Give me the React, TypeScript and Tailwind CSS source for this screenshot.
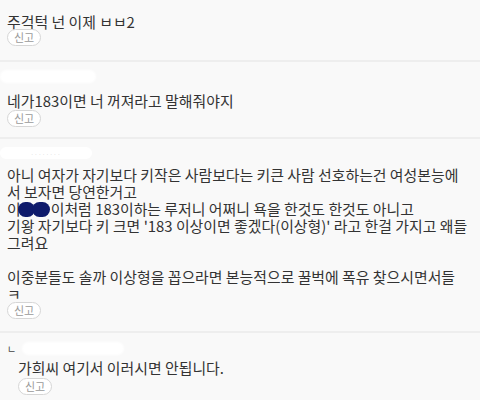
import React from 'react';

const ReportButton: React.FC<{ className?: string }> = ({ className = '' }) => (
  <button
    className={`flex items-center justify-center w-[34px] h-[17px] rounded-full border border-[#d6d6d6] bg-white text-[11px] leading-none text-[#9a9a9a] ${className}`}
  >
    신고
  </button>
);

// erased nickname area
const Blur: React.FC<{ className?: string }> = ({ className = '' }) => (
  <div className={`rounded-full bg-white blur-[1px] ${className}`} />
);

const Masked: React.FC = () => (
  <span className="inline-flex align-[-2px] -ml-[3px] mr-[1px]">
    <span className="w-[17px] h-[15px] rounded-full bg-[#0e1a6b]" />
    <span className="w-[18px] h-[15px] -ml-[3px] rounded-full bg-[#0e1a6b]" />
  </span>
);

const lines = [
  '아니 여자가 자기보다 키작은 사람보다는 키큰 사람 선호하는건 여성본능에',
  '서 보자면 당연한거고',
  null,
  "기왕 자기보다 키 크면 '183 이상이면 좋겠다(이상형)' 라고 한걸 가지고 왜들",
  '그려요',
  '',
  '이중분들도 솔까 이상형을 꼽으라면 본능적으로 꿀벅에 폭유 찾으시면서들',
  'ㅋ',
];

const App: React.FC = () => {
  return (
    <div className="w-[480px] h-[405px] bg-white overflow-hidden font-['Noto_Sans_CJK_KR','Noto_Sans',sans-serif] text-[14.9px] leading-[17px] text-[#333]">
      <div className="bg-[#f9f9f9]">
        {/* comment 1 */}
        <div className="flex flex-col items-start h-[62px] pl-[7px] pt-[13px] border-b-2 border-[#eeeeee]">
          <div className="whitespace-nowrap">주걱턱 넌 이제 ㅂㅂ2</div>
          <ReportButton className="-mt-[1px]" />
        </div>

        {/* comment 2 */}
        <div className="flex flex-col items-start h-[77px] pl-[7px] pt-[8px] border-b-2 border-[#eeeeee]">
          <Blur className="-ml-[7px] w-[96px] h-[13px]" />
          <div className="mt-[9px] whitespace-nowrap">네가183이면 너 꺼져라고 말해줘야지</div>
          <ReportButton className="mt-[1px]" />
        </div>

        {/* comment 3 */}
        <div className="flex flex-col items-start h-[194px] pl-[7px] pt-[8px] border-b-2 border-[#eeeeee]">
          <div className="-ml-[7px] w-[92px] h-[12px] rounded-full bg-white flex items-center justify-center">
            <span className="text-[5px] leading-none tracking-[1px] text-[#c8c8c8]">········</span>
          </div>
          <div className="mt-[7px]">
            {lines.map((l, i) =>
              l === null ? (
                <div key={i} className="whitespace-nowrap h-[17px]">
                  이<Masked />이처럼 183이하는 루저니 어쩌니 욕을 한것도 한것도 아니고
                </div>
              ) : (
                <div key={i} className="whitespace-nowrap h-[17px]">
                  {l}
                </div>
              )
            )}
          </div>
          <ReportButton className="mt-[0px]" />
        </div>

        {/* reply */}
        <div className="flex flex-col items-start h-[67px] pl-[7px] pt-[9px]">
          <div className="flex items-center h-[13px]">
            <span className="text-[10px] leading-none text-[#444]">ㄴ</span>
            <Blur className="ml-[6px] w-[102px] h-[13px]" />
          </div>
          <div className="pl-[11px] mt-[4px] whitespace-nowrap">가희씨 여기서 이러시면 안됩니다.</div>
          <ReportButton className="ml-[11px] mt-[2px]" />
        </div>
      </div>
    </div>
  );
};

export default App;
